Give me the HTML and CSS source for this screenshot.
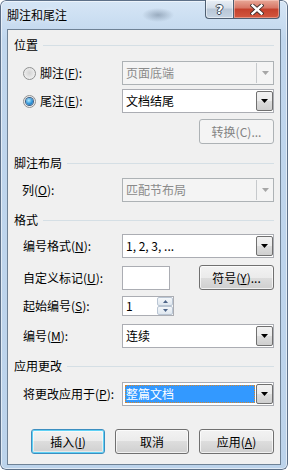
FILE: index.html
```html
<!DOCTYPE html>
<html>
  <head>
    <meta charset="UTF-8">
    <title>脚注和尾注</title>
    <link rel="stylesheet" href="styles.css">
  </head>
  <body>
    <div class="window">
      <div class="titlebar">
        <span class="title">脚注和尾注</span>
        <div class="caption">
          <span class="cap cap-help">?</span>
          <span class="cap cap-close">
            <svg width="14" height="11" viewBox="0 0 14 11">
              <path d="M2.5 1.5l9 8M11.5 1.5l-9 8" stroke="#3a2a28" stroke-width="4.2" stroke-linecap="square"/>
              <path d="M2.5 1.5l9 8M11.5 1.5l-9 8" stroke="#fff" stroke-width="2.4" stroke-linecap="square"/>
            </svg>
          </span>
        </div>
      </div>

      <div class="client">
        <div class="group-head mt7">位置</div>

        <div class="row mt8">
          <label class="lbl">
            <span class="radio"></span>
            <span>脚注(<u>F</u>):</span>
          </label>
          <div class="combo disabled">
            <span class="combo-text">页面底端</span>
            <span class="combo-btn"><svg width="7" height="4"><path d="M0 0h7L3.5 4z"/></svg></span>
          </div>
        </div>

        <div class="row mt4">
          <label class="lbl">
            <span class="radio"><span class="radio-dot"></span></span>
            <span>尾注(<u>E</u>):</span>
          </label>
          <div class="combo">
            <span class="combo-text">文档结尾</span>
            <span class="combo-btn"><svg width="7" height="4"><path d="M0 0h7L3.5 4z"/></svg></span>
          </div>
        </div>

        <div class="row mt6">
          <button class="btn btn-side" disabled>转换(C)...</button>
        </div>

        <div class="group-head mt11">脚注布局</div>

        <div class="row mt7">
          <span class="lbl lbl-col">列(<u>O</u>):</span>
          <div class="combo disabled">
            <span class="combo-text">匹配节布局</span>
            <span class="combo-btn"><svg width="7" height="4"><path d="M0 0h7L3.5 4z"/></svg></span>
          </div>
        </div>

        <div class="group-head mt10">格式</div>

        <div class="row mt6">
          <span class="lbl">编号格式(<u>N</u>):</span>
          <div class="combo">
            <span class="combo-text">1, 2, 3, ...</span>
            <span class="combo-btn"><svg width="7" height="4"><path d="M0 0h7L3.5 4z"/></svg></span>
          </div>
        </div>

        <div class="row mt7">
          <span class="lbl">自定义标记(<u>U</u>):</span>
          <span class="textbox"></span>
          <button class="btn btn-side">符号(<u>Y</u>)...</button>
        </div>

        <div class="row mt6">
          <span class="lbl">起始编号(<u>S</u>):</span>
          <div class="spin">
            <span class="spin-val">1</span>
            <span class="spin-btns">
              <span class="spin-btn"><svg width="5" height="3"><path d="M0 3h5L2.5 0z"/></svg></span>
              <span class="spin-btn"><svg width="5" height="3"><path d="M0 0h5L2.5 3z"/></svg></span>
            </span>
          </div>
        </div>

        <div class="row mt8">
          <span class="lbl">编号(<u>M</u>):</span>
          <div class="combo">
            <span class="combo-text">连续</span>
            <span class="combo-btn"><svg width="7" height="4"><path d="M0 0h7L3.5 4z"/></svg></span>
          </div>
        </div>

        <div class="group-head mt10">应用更改</div>

        <div class="row mt8">
          <span class="lbl">将更改应用于(<u>P</u>):</span>
          <div class="combo">
            <span class="combo-text selected">整篇文档</span>
            <span class="combo-btn"><svg width="7" height="4"><path d="M0 0h7L3.5 4z"/></svg></span>
          </div>
        </div>

        <div class="actions mt23">
          <button class="btn btn-default">插入(<u>I</u>)</button>
          <button class="btn">取消</button>
          <button class="btn btn-wide">应用(<u>A</u>)</button>
        </div>
      </div>
    </div>
  </body>
</html>
```

FILE: styles.css
```css
* {
  box-sizing: border-box;
}
html, body {
  margin: 0;
}
body {
  width: 288px;
  height: 470px;
  overflow: hidden;
  font-family: "Noto Sans CJK SC", "Liberation Sans", sans-serif;
  font-size: 12px;
  color: #000;
}
u {
  text-decoration: underline;
  text-underline-offset: 1px;
}

/* window frame */
.window {
  width: 288px;
  height: 470px;
  border-radius: 6px;
  background:
    radial-gradient(16px 7px at 158px 15px, rgba(90, 108, 130, 0.45), rgba(90, 108, 130, 0)),
    linear-gradient(#d6e6f6, #c0d6ed 40px, #bcd3eb);
  box-shadow: inset 0 0 0 1px #5d7088, inset 0 0 0 2px rgba(255, 255, 255, 0.55);
  display: flex;
  flex-direction: column;
}
.titlebar {
  flex: none;
  height: 29px;
  display: flex;
  align-items: flex-start;
  padding: 0 8px 0 7px;
}
.title {
  margin-top: 7px;
  line-height: 16px;
  text-shadow: 0 0 5px rgba(255, 255, 255, 0.9);
}
.caption {
  margin-left: auto;
  display: flex;
}
.cap {
  height: 19px;
  border: 1px solid #4f5f72;
  border-top: 0;
  display: flex;
  align-items: center;
  justify-content: center;
}
.cap-help {
  width: 28px;
  border-right: 0;
  border-radius: 0 0 0 4px;
  background: linear-gradient(#e9eff6, #d3dde8 45%, #b8c6d6 50%, #c6d4e3);
  box-shadow: inset 0 0 0 1px rgba(255, 255, 255, 0.5);
  color: #fff;
  font-family: "DejaVu Sans", sans-serif;
  font-weight: bold;
  font-size: 13px;
  line-height: 13px;
  text-shadow: 1px 0 0 #3a4656, -1px 0 0 #3a4656, 0 1px 0 #3a4656, 0 -1px 0 #3a4656;
}
.cap-close {
  width: 47px;
  border-radius: 0 0 4px 0;
  background: linear-gradient(#e8a898, #d77564 45%, #c4402c 50%, #d3583f);
  box-shadow: inset 0 0 0 1px rgba(255, 220, 210, 0.45);
}

/* client area */
.client {
  flex: none;
  margin: 0 7px;
  height: 436px;
  border: 1px solid #6f8296;
  background: #f0f0f0;
  padding: 0 6px 0 0;
}
.mt4 { margin-top: 4px; }
.mt6 { margin-top: 6px; }
.mt7 { margin-top: 7px; }
.mt8 { margin-top: 8px; }
.mt10 { margin-top: 10px; }
.mt11 { margin-top: 11px; }
.mt23 { margin-top: 23px; }

.group-head {
  display: flex;
  align-items: center;
  height: 16px;
  line-height: 16px;
  padding-left: 6px;
}
.group-head::after {
  content: "";
  flex: 1;
  height: 1px;
  margin-left: 5px;
  background: #d5dfe5;
}

.row {
  display: flex;
  align-items: center;
  padding-left: 15px;
}
.lbl {
  width: 99px;
  display: flex;
  align-items: center;
  line-height: 16px;
  white-space: nowrap;
}
.lbl-col {
  margin-left: -1px;
  width: 100px;
}

/* radio */
.radio {
  width: 13px;
  height: 13px;
  margin-right: 4px;
  border-radius: 50%;
  border: 1px solid #8f9090;
  background: radial-gradient(circle at 50% 45%, #d3d3d3, #eeeeee 70%, #f8f8f8);
  display: flex;
  align-items: center;
  justify-content: center;
}
.radio-dot {
  width: 7px;
  height: 7px;
  border-radius: 50%;
  background: radial-gradient(circle at 40% 35%, #b5ecff, #2e93d8 55%, #155a9c);
  box-shadow: 0 0 0 1px #3b5f86;
}

/* combo box */
.combo {
  width: 152px;
  height: 24px;
  border: 1px solid #abadb3;
  background: #fff;
  padding: 1px 0 1px 1px;
  display: flex;
}
.combo-text {
  flex: 1;
  padding-left: 2px;
  line-height: 20px;
  white-space: nowrap;
}
.combo-text.selected {
  margin: 1px 1px 1px 1px;
  line-height: 18px;
  padding-left: 1px;
  background: #3399ff;
  color: #fff;
  outline: 1px dotted #d8862a;
  outline-offset: -1px;
}
.combo-btn {
  width: 17px;
  border: 1px solid #707070;
  border-radius: 2px;
  background: linear-gradient(#f2f2f2, #ebebeb 50%, #dddddd 50%, #cfcfcf);
  display: flex;
  align-items: center;
  justify-content: center;
  fill: #000;
}
.combo.disabled {
  background: #f4f4f4;
  border-color: #adb2b5;
  color: #8a8a8a;
}
.combo.disabled .combo-btn {
  border: 0;
  border-left: 1px solid #c6c9cc;
  border-radius: 0;
  background: none;
  fill: #a6a6a6;
}

/* text box and spinner */
.textbox {
  width: 48px;
  height: 24px;
  border: 1px solid #abadb3;
  background: #fff;
}
.spin {
  width: 52px;
  height: 20px;
  border: 1px solid #abadb3;
  background: #fff;
  display: flex;
}
.spin-val {
  flex: 1;
  padding-left: 3px;
  line-height: 18px;
}
.spin-btns {
  width: 16px;
  display: flex;
  flex-direction: column;
}
.spin-btn {
  flex: 1;
  border: 1px solid #b9c5d3;
  border-radius: 2px;
  background: linear-gradient(#f4f7fa, #dfe7ef);
  display: flex;
  align-items: center;
  justify-content: center;
  fill: #4d6488;
}

/* push buttons */
.btn {
  width: 74px;
  height: 25px;
  padding: 0;
  border: 1px solid #707070;
  border-radius: 3px;
  background: linear-gradient(#f2f2f2, #ebebeb 50%, #dddddd 50%, #cfcfcf);
  box-shadow: inset 0 0 0 1px rgba(255, 255, 255, 0.7);
  font: inherit;
  line-height: 16px;
  color: #000;
}
.btn-side {
  width: 75px;
  margin-left: auto;
}
.btn-wide {
  width: 75px;
}
.btn:disabled {
  border-color: #adb2b5;
  background: #f4f4f4;
  box-shadow: none;
  color: #838383;
}
.btn-default {
  border-color: #3c8ec0;
  box-shadow: inset 0 0 0 1px #5fd1f5, inset 0 0 0 2px rgba(255, 255, 255, 0.5);
}
.actions {
  display: flex;
  justify-content: flex-end;
  gap: 10px;
}
```
